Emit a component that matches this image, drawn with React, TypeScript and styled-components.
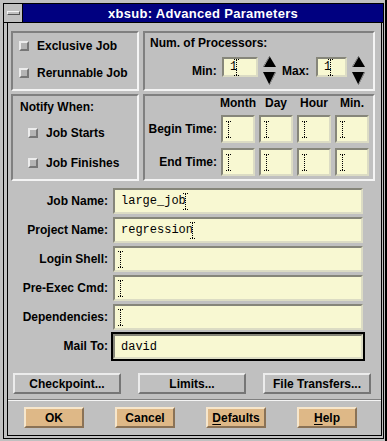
import { Fragment } from 'react'
import styled, { createGlobalStyle, css } from 'styled-components'

const GlobalStyle = createGlobalStyle`
  html, body { margin: 0; padding: 0; background: #c0c0c0; }
  body {
    font-family: "Liberation Sans", Arial, Helvetica, sans-serif;
    font-size: 12px;
    color: #000;
  }
  * { box-sizing: border-box; }
`

const etchedIn = css`
  border-style: solid;
  border-width: 2px;
  border-color: #808080 #f4f4f4 #f4f4f4 #808080;
`

const textWell = css`
  background: #f8f8d2;
  border-style: solid;
  border-width: 2px;
  border-color: #86867a #dcdcc4 #dcdcc4 #86867a;
  font-family: "Liberation Mono", "Courier New", monospace;
  font-size: 12px;
  display: flex;
  align-items: center;
  white-space: pre;
`

const Screen = styled.div`
  display: flex;
  width: 387px;
  height: 441px;
  overflow: hidden;
`

const Frame = styled.div`
  width: 385px;
  padding: 3px 1px 0 3px;
  background: #c0c0c0;
`

const Backdrop = styled.div`
  flex: 1;
  background: #000;
`

const Window = styled.div`
  height: 436px;
  border: 1px solid #000;
  display: flex;
  flex-direction: column;
`

const TitleBar = styled.div`
  display: flex;
  height: 19px;
  border-bottom: 1px solid #000;
`

const MenuBox = styled.div`
  width: 19px;
  border-right: 1px solid #000;
  display: flex;
  align-items: center;
  justify-content: center;
`

const MenuBar = styled.div`
  width: 13px;
  height: 4px;
  border-style: solid;
  border-width: 1px;
  border-color: #f4f4f4 #555 #555 #f4f4f4;
`

const Title = styled.div`
  flex: 1;
  background: #000080;
  color: #fff;
  font-weight: bold;
  font-size: 13px;
  letter-spacing: 0.3px;
  display: flex;
  align-items: center;
  justify-content: center;
`

const Body = styled.div`
  flex: 1;
  margin: 0 1px 2px 3px;
  border: 1px solid #000;
  border-top: none;
  padding: 8px 5px 0 3px;
  display: flex;
  flex-direction: column;
`

const PanelGrid = styled.div`
  display: grid;
  grid-template-columns: 128px 232px;
  grid-template-rows: 60px 87px;
  column-gap: 4px;
  row-gap: 3px;
`

const Panel = styled.div<{ $pad: string }>`
  ${etchedIn};
  padding: ${(p) => p.$pad};
  display: flex;
  flex-direction: column;
`

const Heading = styled.div`
  font-weight: bold;
  line-height: 16px;
  white-space: nowrap;
`

const ToggleList = styled.div<{ $gap: number; $top: number; $indent: number }>`
  display: flex;
  flex-direction: column;
  gap: ${(p) => p.$gap}px;
  margin-top: ${(p) => p.$top}px;
  padding-left: ${(p) => p.$indent}px;
`

const ToggleRow = styled.div`
  display: flex;
  align-items: center;
  gap: 8px;
  height: 22px;
  font-weight: bold;
  white-space: nowrap;
`

const Toggle = styled.span`
  width: 10px;
  height: 10px;
  background: #b4b4b4;
  border-style: solid;
  border-width: 2px;
  border-color: #ececec #767676 #767676 #ececec;
`

const SpinRow = styled.div`
  display: flex;
  align-items: flex-start;
  margin-top: 5px;
  padding-left: 42px;
`

const SpinLabel = styled.span<{ $w: number }>`
  width: ${(p) => p.$w}px;
  margin-top: 7px;
  line-height: 16px;
  font-weight: bold;
`

const SpinField = styled.div<{ $w: number }>`
  ${textWell};
  width: ${(p) => p.$w}px;
  height: 20px;
  margin-top: 1px;
  margin-right: 5px;
  padding-left: 6px;
`

const ArrowSvg = styled.svg`
  display: block;
  margin-right: 6px;
`

const DateGrid = styled.div`
  display: grid;
  grid-template-columns: 72px repeat(4, 34px);
  grid-template-rows: 14px 28px 28px;
  column-gap: 4px;
  row-gap: 5px;
`

const DateHead = styled.div`
  display: flex;
  justify-content: center;
  align-items: center;
  font-weight: bold;
  white-space: nowrap;
`

const DateLabel = styled.div`
  display: flex;
  align-items: center;
  justify-content: flex-end;
  font-weight: bold;
  white-space: nowrap;
`

const DateBox = styled.div`
  ${textWell};
  padding-left: 6px;
`

const Form = styled.div`
  display: grid;
  grid-template-columns: 97px 250px;
  grid-auto-rows: 26px;
  column-gap: 5px;
  row-gap: 3px;
  margin-top: 7px;
`

const FieldLabel = styled.div`
  text-align: right;
  line-height: 26px;
  font-weight: bold;
  white-space: nowrap;
`

const Field = styled.div<{ $focused?: boolean }>`
  ${textWell};
  padding-left: 6px;
  ${(p) => p.$focused && css`
    margin-top: 1px;
    box-shadow: 0 0 0 2px #000;
  `}
`

const ActionRow = styled.div`
  display: flex;
  gap: 17px;
  padding-left: 2px;
  margin-top: 14px;
`

const raised = css`
  height: 21px;
  border-style: solid;
  border-width: 2px;
  display: flex;
  align-items: center;
  justify-content: center;
  font-weight: bold;
  font-size: 12px;
  white-space: nowrap;
`

const ActionButton = styled.div`
  ${raised};
  width: 108px;
  background: #c0c0c0;
  border-color: #ececec #767676 #767676 #ececec;
`

const Separator = styled.div`
  height: 2px;
  margin: 5px -5px 0 -3px;
  border-top: 1px solid #808080;
  border-bottom: 1px solid #f4f4f4;
`

const DialogRow = styled.div`
  display: flex;
  gap: 31px;
  padding-left: 13px;
  margin-top: 6px;
`

const DialogButton = styled.div`
  ${raised};
  width: 60px;
  background: #deb887;
  border-color: #f6e6cc #8a7256 #8a7256 #f6e6cc;

  u {
    text-underline-offset: 2px;
  }
`

const CaretSvg = styled.svg`
  display: block;
  flex: none;
  margin-left: -3px;
`

const Caret = () => (
  <CaretSvg width="5" height="17" viewBox="0 0 5 17" shapeRendering="crispEdges">
    <g stroke="#000" strokeWidth="1" strokeDasharray="1 1" fill="none">
      <line x1="0" y1="0.5" x2="5" y2="0.5" />
      <line x1="2.5" y1="1" x2="2.5" y2="16" />
      <line x1="0" y1="16.5" x2="5" y2="16.5" />
    </g>
  </CaretSvg>
)

const SpinArrows = () => (
  <ArrowSvg width="13" height="29" viewBox="0 0 13 29">
    <polygon points="6.5,0 13,11 0,11" fill="#000" />
    <line x1="0.5" y1="11" x2="6.5" y2="0.5" stroke="#9a9a9a" />
    <polygon points="0,16 13,16 6.5,29" fill="#000" />
    <line x1="12.5" y1="16" x2="6.5" y2="28.5" stroke="#9a9a9a" />
  </ArrowSvg>
)

const dateColumns = ['Month', 'Day', 'Hour', 'Min.']

const fields = [
  { label: 'Job Name:', value: 'large_job' },
  { label: 'Project Name:', value: 'regression' },
  { label: 'Login Shell:', value: '' },
  { label: 'Pre-Exec Cmd:', value: '' },
  { label: 'Dependencies:', value: '' },
]

export default function App() {
  return (
    <Screen>
      <GlobalStyle />
      <Frame>
        <Window>
          <TitleBar>
            <MenuBox>
              <MenuBar />
            </MenuBox>
            <Title>xbsub: Advanced Parameters</Title>
          </TitleBar>
          <Body>
            <PanelGrid>
              <Panel $pad="2px 0 0 6px">
                <ToggleList $gap={5} $top={0} $indent={0}>
                  <ToggleRow><Toggle />Exclusive Job</ToggleRow>
                  <ToggleRow><Toggle />Rerunnable Job</ToggleRow>
                </ToggleList>
              </Panel>

              <Panel $pad="2px 0 0 5px">
                <Heading>Num. of Processors:</Heading>
                <SpinRow>
                  <SpinLabel $w={30}>Min:</SpinLabel>
                  <SpinField $w={36}>1<Caret /></SpinField>
                  <SpinArrows />
                  <SpinLabel $w={34}>Max:</SpinLabel>
                  <SpinField $w={31}>1<Caret /></SpinField>
                  <SpinArrows />
                </SpinRow>
              </Panel>

              <Panel $pad="3px 0 0 7px">
                <Heading>Notify When:</Heading>
                <ToggleList $gap={8} $top={7} $indent={8}>
                  <ToggleRow><Toggle />Job Starts</ToggleRow>
                  <ToggleRow><Toggle />Job Finishes</ToggleRow>
                </ToggleList>
              </Panel>

              <Panel $pad="0">
                <DateGrid>
                  <span />
                  {dateColumns.map((c) => <DateHead key={c}>{c}</DateHead>)}
                  <DateLabel>Begin Time:</DateLabel>
                  {dateColumns.map((c) => <DateBox key={'b' + c}><Caret /></DateBox>)}
                  <DateLabel>End Time:</DateLabel>
                  {dateColumns.map((c) => <DateBox key={'e' + c}><Caret /></DateBox>)}
                </DateGrid>
              </Panel>
            </PanelGrid>

            <Form>
              {fields.map((f) => (
                <Fragment key={f.label}>
                  <FieldLabel>{f.label}</FieldLabel>
                  <Field>{f.value}<Caret /></Field>
                </Fragment>
              ))}
              <FieldLabel>Mail To:</FieldLabel>
              <Field $focused>david</Field>
            </Form>

            <ActionRow>
              <ActionButton>Checkpoint...</ActionButton>
              <ActionButton>Limits...</ActionButton>
              <ActionButton>File Transfers...</ActionButton>
            </ActionRow>

            <Separator />

            <DialogRow>
              <DialogButton>OK</DialogButton>
              <DialogButton>Cancel</DialogButton>
              <DialogButton><u>D</u>efaults</DialogButton>
              <DialogButton><u>H</u>elp</DialogButton>
            </DialogRow>
          </Body>
        </Window>
      </Frame>
      <Backdrop />
    </Screen>
  )
}
